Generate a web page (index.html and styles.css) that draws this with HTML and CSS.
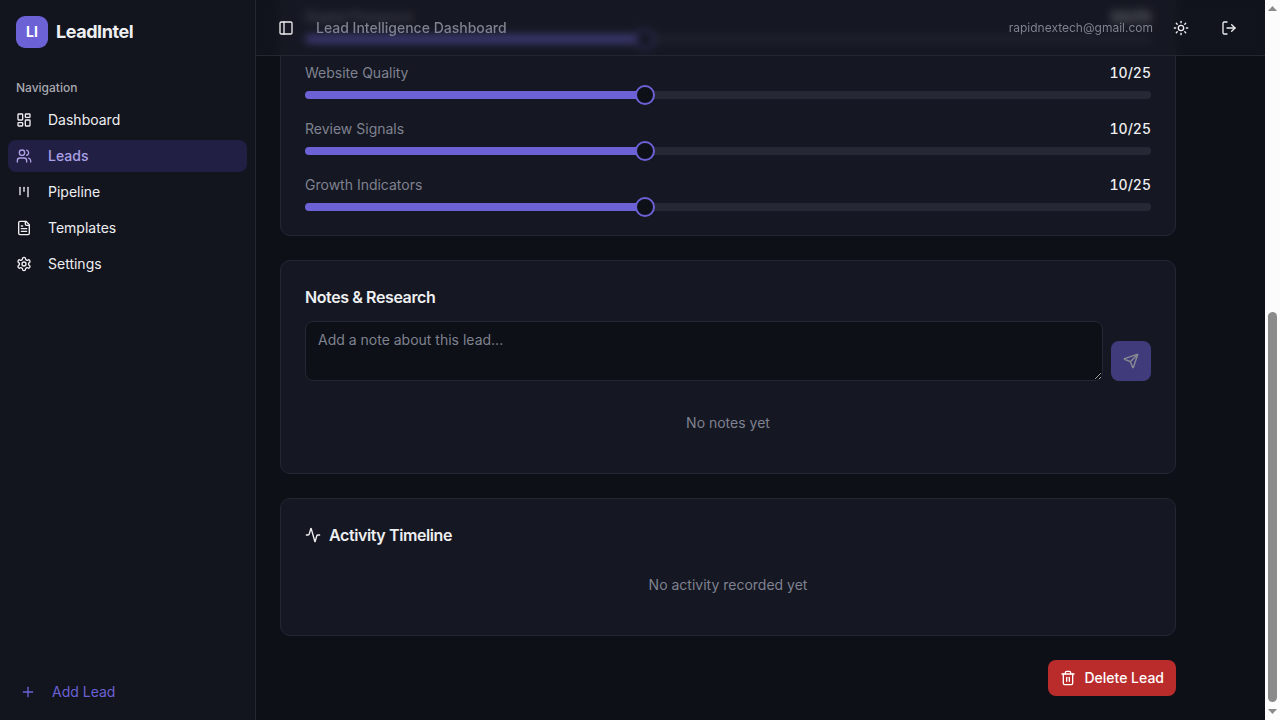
FILE: index.html
```html
<!DOCTYPE html>
<html lang="en">
<head>
<meta charset="utf-8">
<meta name="viewport" content="width=device-width, initial-scale=1">
<title>LeadIntel</title>
<link rel="stylesheet" href="styles.css">
</head>
<body>
<div class="app">
  <aside class="sidebar">
    <div class="brand">
      <span class="brand-mark">LI</span>
      <span class="brand-name">LeadIntel</span>
    </div>
    <nav class="nav" aria-labelledby="nav-label">
      <div class="nav-label" id="nav-label">Navigation</div>
      <a class="nav-item" href="#dashboard">
        <svg class="icon" viewBox="0 0 24 24"><rect width="7" height="9" x="3" y="3" rx="1"/><rect width="7" height="5" x="14" y="3" rx="1"/><rect width="7" height="9" x="14" y="12" rx="1"/><rect width="7" height="5" x="3" y="16" rx="1"/></svg>
        Dashboard</a>
      <a class="nav-item active" href="#leads" aria-current="page">
        <svg class="icon" viewBox="0 0 24 24"><path d="M16 21v-2a4 4 0 0 0-4-4H6a4 4 0 0 0-4 4v2"/><circle cx="9" cy="7" r="4"/><path d="M22 21v-2a4 4 0 0 0-3-3.87"/><path d="M16 3.13a4 4 0 0 1 0 7.75"/></svg>
        Leads</a>
      <a class="nav-item" href="#pipeline">
        <svg class="icon" viewBox="0 0 24 24"><path d="M6 5v11"/><path d="M12 5v6"/><path d="M18 5v14"/></svg>
        Pipeline</a>
      <a class="nav-item" href="#templates">
        <svg class="icon" viewBox="0 0 24 24"><path d="M15 2H6a2 2 0 0 0-2 2v16a2 2 0 0 0 2 2h12a2 2 0 0 0 2-2V7Z"/><path d="M14 2v4a2 2 0 0 0 2 2h4"/><path d="M10 9H8"/><path d="M16 13H8"/><path d="M16 17H8"/></svg>
        Templates</a>
      <a class="nav-item" href="#settings">
        <svg class="icon" viewBox="0 0 24 24"><path d="M12.22 2h-.44a2 2 0 0 0-2 2v.18a2 2 0 0 1-1 1.73l-.43.25a2 2 0 0 1-2 0l-.15-.08a2 2 0 0 0-2.73.73l-.22.38a2 2 0 0 0 .73 2.73l.15.1a2 2 0 0 1 1 1.72v.51a2 2 0 0 1-1 1.74l-.15.09a2 2 0 0 0-.73 2.73l.22.38a2 2 0 0 0 2.73.73l.15-.08a2 2 0 0 1 2 0l.43.25a2 2 0 0 1 1 1.73V20a2 2 0 0 0 2 2h.44a2 2 0 0 0 2-2v-.18a2 2 0 0 1 1-1.73l.43-.25a2 2 0 0 1 2 0l.15.08a2 2 0 0 0 2.73-.73l.22-.39a2 2 0 0 0-.73-2.73l-.15-.08a2 2 0 0 1-1-1.74v-.5a2 2 0 0 1 1-1.74l.15-.09a2 2 0 0 0 .73-2.73l-.22-.38a2 2 0 0 0-2.73-.73l-.15.08a2 2 0 0 1-2 0l-.43-.25a2 2 0 0 1-1-1.73V4a2 2 0 0 0-2-2z"/><circle cx="12" cy="12" r="3"/></svg>
        Settings</a>
    </nav>
    <button class="add-lead" type="button">
      <svg class="icon" viewBox="0 0 24 24"><path d="M5 12h14"/><path d="M12 5v14"/></svg>
      Add Lead</button>
  </aside>

  <div class="main">
    <header class="topbar">
      <button class="icon-button small" type="button" aria-label="Toggle sidebar">
        <svg class="icon" viewBox="0 0 24 24"><rect width="18" height="18" x="3" y="3" rx="2"/><path d="M9 3v18"/></svg>
      </button>
      <span class="topbar-title">Lead Intelligence Dashboard</span>
      <div class="topbar-actions">
        <span class="email">rapidnextech@gmail.com</span>
        <button class="icon-button" type="button" aria-label="Toggle theme">
          <svg class="icon" viewBox="0 0 24 24"><circle cx="12" cy="12" r="4"/><path d="M12 2v2"/><path d="M12 20v2"/><path d="m4.93 4.93 1.41 1.41"/><path d="m17.66 17.66 1.41 1.41"/><path d="M2 12h2"/><path d="M20 12h2"/><path d="m6.34 17.66-1.41 1.41"/><path d="m19.07 4.93-1.41 1.41"/></svg>
        </button>
        <button class="icon-button" type="button" aria-label="Log out">
          <svg class="icon" viewBox="0 0 24 24"><path d="M9 21H5a2 2 0 0 1-2-2V5a2 2 0 0 1 2-2h4"/><path d="m16 17 5-5-5-5"/><path d="M21 12H9"/></svg>
        </button>
      </div>
    </header>

    <main class="content">
      <section class="card scores">
        <div class="score">
          <div class="score-head"><label for="presence">Digital Presence</label><output for="presence">10/25</output></div>
          <input class="slider" id="presence" type="range" min="0" max="25" value="10">
        </div>
        <div class="score">
          <div class="score-head"><label for="website">Website Quality</label><output for="website">10/25</output></div>
          <input class="slider" id="website" type="range" min="0" max="25" value="10">
        </div>
        <div class="score">
          <div class="score-head"><label for="reviews">Review Signals</label><output for="reviews">10/25</output></div>
          <input class="slider" id="reviews" type="range" min="0" max="25" value="10">
        </div>
        <div class="score">
          <div class="score-head"><label for="growth">Growth Indicators</label><output for="growth">10/25</output></div>
          <input class="slider" id="growth" type="range" min="0" max="25" value="10">
        </div>
      </section>

      <section class="card">
        <h2 class="card-title">Notes &amp; Research</h2>
        <form class="note-form">
          <textarea class="note-input" aria-label="Note" placeholder="Add a note about this lead..."></textarea>
          <button class="send" type="submit" aria-label="Add note" disabled>
            <svg class="icon" viewBox="0 0 24 24"><path d="M14.536 21.686a.5.5 0 0 0 .937-.024l6.5-19a.496.496 0 0 0-.635-.635l-19 6.5a.5.5 0 0 0-.024.937l7.93 3.18a2 2 0 0 1 1.112 1.11z"/><path d="m21.854 2.147-10.94 10.939"/></svg>
          </button>
        </form>
        <p class="empty notes-empty">No notes yet</p>
      </section>

      <section class="card">
        <h2 class="card-title">
          <svg class="icon" viewBox="0 0 24 24"><path d="M22 12h-2.48a2 2 0 0 0-1.93 1.46l-2.35 8.36a.25.25 0 0 1-.48 0L9.24 2.18a.25.25 0 0 0-.48 0l-2.35 8.36A2 2 0 0 1 4.49 12H2"/></svg>
          Activity Timeline</h2>
        <p class="empty">No activity recorded yet</p>
      </section>

      <button class="delete" type="button">
        <svg class="icon" viewBox="0 0 24 24"><path d="M3 6h18"/><path d="M19 6v14a2 2 0 0 1-2 2H7a2 2 0 0 1-2-2V6"/><path d="M8 6V4a2 2 0 0 1 2-2h4a2 2 0 0 1 2 2v2"/><path d="M10 11v6"/><path d="M14 11v6"/></svg>
        Delete Lead</button>
    </main>
  </div>

  <div class="scrollbar" aria-hidden="true">
    <svg class="arrow" viewBox="0 0 9 5"><path d="M0 5 4.5 0 9 5z"/></svg>
    <div class="scroll-track"><div class="scroll-thumb"></div></div>
    <svg class="arrow" viewBox="0 0 9 5"><path d="M0 0 4.5 5 9 0z"/></svg>
  </div>
</div>
</body>
</html>
```

FILE: styles.css
```css
:root {
  --bg: #0d1017;
  --card: #151722;
  --sidebar: #12141e;
  --border: #242632;
  --text: #eeeff1;
  --muted: #7f8290;
  --primary: #6c62d6;
  --track: #262835;
}

* { box-sizing: border-box; }

body {
  margin: 0;
  background: var(--bg);
  color: var(--text);
  font: 14px/20px Inter, "Liberation Sans", sans-serif;
}

button, textarea { font: inherit; color: inherit; }
button { border: 0; padding: 0; background: none; cursor: pointer; }
h2, p { margin: 0; }

.icon {
  width: 16px;
  height: 16px;
  flex: none;
  fill: none;
  stroke: currentColor;
  stroke-width: 2;
  stroke-linecap: round;
  stroke-linejoin: round;
}

.app { display: flex; height: 100vh; overflow: hidden; }

/* Sidebar */
.sidebar {
  display: flex;
  flex-direction: column;
  flex: none;
  width: 256px;
  background: var(--sidebar);
  border-right: 1px solid var(--border);
}
.brand { display: flex; align-items: center; gap: 8px; padding: 16px; }
.brand-mark {
  display: grid;
  place-items: center;
  width: 32px;
  height: 32px;
  border-radius: 9px;
  background: var(--primary);
  color: #fff;
  font-weight: 700;
}
.brand-name { font-size: 18px; line-height: 28px; font-weight: 700; letter-spacing: -0.025em; }
.nav { display: flex; flex-direction: column; gap: 4px; flex: 1; padding: 8px; }
.nav-label {
  padding: 8px;
  color: #a9aab0;
  font-size: 12px;
  line-height: 16px;
  font-weight: 500;
  margin-bottom: -4px;
}
.nav-item {
  display: flex;
  align-items: center;
  gap: 16px;
  height: 32px;
  padding: 0 8px;
  border-radius: 8px;
  color: var(--text);
  text-decoration: none;
}
.nav-item.active { background: #221f45; color: #aaa1e6; font-weight: 500; }
.add-lead {
  display: flex;
  align-items: center;
  gap: 16px;
  height: 40px;
  margin: 8px;
  padding: 0 12px;
  color: var(--primary);
}

/* Main column, shown scrolled to its end beneath the top bar */
.main {
  position: relative;
  display: flex;
  flex-direction: column;
  justify-content: flex-end;
  flex: 1;
  min-width: 0;
  overflow: hidden;
}
.topbar {
  position: absolute;
  inset: 0 0 auto;
  z-index: 1;
  display: flex;
  align-items: center;
  gap: 16px;
  height: 56px;
  padding: 0 16px;
  border-bottom: 1px solid var(--border);
  background: rgba(22, 24, 34, 0.5);
  backdrop-filter: blur(4px);
}
.topbar-title { color: var(--muted); font-weight: 500; }
.topbar-actions { display: flex; align-items: center; gap: 8px; margin-left: auto; }
.email { color: var(--muted); font-size: 12px; line-height: 16px; }
.icon-button { display: grid; place-items: center; width: 40px; height: 40px; }
.icon-button.small { width: 28px; height: 28px; }

.content {
  display: flex;
  flex-direction: column;
  gap: 24px;
  width: 100%;
  max-width: 944px;
  padding: 24px;
}
.card {
  padding: 24px;
  border: 1px solid var(--border);
  border-radius: 10px;
  background: var(--card);
}
.card-title {
  display: flex;
  align-items: center;
  gap: 8px;
  margin-bottom: 12px;
  font-size: 16px;
  line-height: 24px;
  font-weight: 600;
  letter-spacing: -0.025em;
}
.empty { padding: 16px 0; color: var(--muted); text-align: center; }
.notes-empty { margin-top: 16px; }

/* Score sliders */
.scores { display: flex; flex-direction: column; gap: 20px; }
.score { display: flex; flex-direction: column; gap: 8px; }
.score-head { display: flex; justify-content: space-between; }
.score-head label { color: var(--muted); }
.score-head output { font-weight: 500; font-variant-numeric: tabular-nums; }
.slider {
  appearance: none;
  display: block;
  width: 100%;
  height: 8px;
  margin: 0;
  border-radius: 4px;
  background: linear-gradient(to right, var(--primary) 40%, var(--track) 40%);
}
.slider::-webkit-slider-thumb {
  appearance: none;
  width: 20px;
  height: 20px;
  border: 2px solid var(--primary);
  border-radius: 50%;
  background: var(--bg);
}

/* Notes */
.note-form { display: flex; align-items: flex-end; gap: 8px; }
.note-input {
  display: block;
  flex: 1;
  height: 60px;
  padding: 8px 12px;
  border: 1px solid var(--border);
  border-radius: 8px;
  background: var(--bg);
  resize: vertical;
}
.note-input::placeholder { color: var(--muted); }
.send {
  display: grid;
  place-items: center;
  width: 40px;
  height: 40px;
  border-radius: 8px;
  background: var(--primary);
  color: #fff;
  opacity: 0.5;
}

.delete {
  display: flex;
  align-items: center;
  align-self: flex-end;
  gap: 8px;
  height: 36px;
  padding: 0 12px;
  border-radius: 8px;
  background: #ba2c2c;
  color: #fff;
  font-weight: 500;
}

/* Scrollbar */
.scrollbar {
  display: flex;
  flex-direction: column;
  align-items: center;
  flex: none;
  width: 15px;
  padding: 6px 0;
  background: #fcfcfc;
}
.arrow { width: 9px; height: 5px; fill: #8b8b8b; }
.scroll-track {
  display: flex;
  flex-direction: column;
  justify-content: flex-end;
  flex: 1;
  padding: 7px 0;
}
.scroll-thumb { width: 9px; height: 57%; border-radius: 5px; background: #8b8b8b; }
```
